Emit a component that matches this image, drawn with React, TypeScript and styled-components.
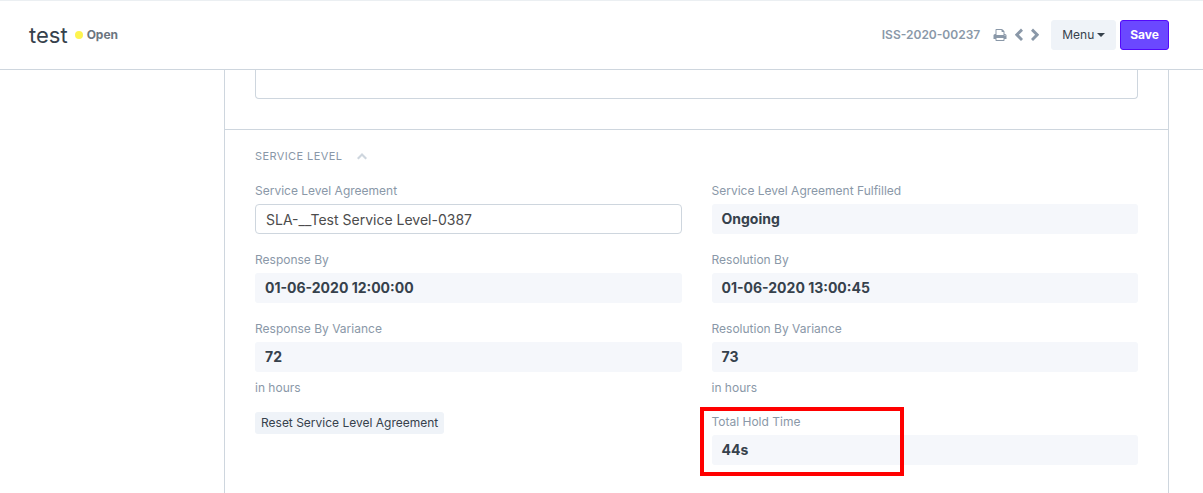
import React from "react";
import styled, { createGlobalStyle } from "styled-components";

const c = {
  text: "#36414c",
  muted: "#8a98a8",
  border: "#ced6de",
  valueBg: "#f5f7fb",
  buttonBg: "#eff3f8",
  primary: "#6b48ff",
  primaryBorder: "#5308fb",
};

const GlobalStyle = createGlobalStyle`
  *, *::before, *::after { box-sizing: border-box; }
  body {
    margin: 0;
    background: #fff;
    color: ${c.text};
    font-family: Inter, "Open Sans", sans-serif;
    font-size: 12px;
    line-height: 18px;
  }
  button, input, textarea { font: inherit; color: inherit; margin: 0; }
`;

const Page = styled.div`
  display: flex;
  flex-direction: column;
  min-height: 100vh;
`;

const PageHead = styled.header`
  border-top: 1px solid #ebeff2;
  border-bottom: 1px solid ${c.border};
  padding: 19px 34px 19px 29px;
`;

const HeadRow = styled.div`
  display: flex;
  align-items: center;
  max-width: 1140px;
  margin: 0 auto;
`;

const Title = styled.h1`
  margin: 0 7px 0 0;
  font-size: 22px;
  line-height: 30px;
  font-weight: 400;
`;

const Status = styled.span`
  display: flex;
  align-items: center;
  gap: 4px;
  color: #6c7680;
  font-weight: 700;

  &::before {
    content: "";
    width: 8px;
    height: 8px;
    border-radius: 50%;
    background: #fef44f;
  }
`;

const DocName = styled.span`
  margin-left: auto;
  margin-right: 13px;
  color: ${c.muted};
  font-weight: 600;
`;

const IconGroup = styled.div`
  display: flex;
  align-items: center;
  gap: 8px;
  margin-right: 12px;
`;

const IconButton = styled.button`
  display: flex;
  padding: 0;
  border: 0;
  background: none;
  color: ${c.muted};
`;

const HeadButton = styled.button<{ $primary?: boolean }>`
  display: flex;
  align-items: center;
  gap: 3px;
  height: 30px;
  margin-left: ${(p) => (p.$primary ? "4px" : "0")};
  padding: 0 ${(p) => (p.$primary ? "9px" : "10px")};
  border: 1px solid ${(p) => (p.$primary ? c.primaryBorder : c.buttonBg)};
  border-radius: 3px;
  background: ${(p) => (p.$primary ? c.primary : c.buttonBg)};
  color: ${(p) => (p.$primary ? "#fff" : c.text)};
  font-weight: ${(p) => (p.$primary ? 700 : 400)};
`;

const Body = styled.main`
  display: flex;
  flex: 1;
  padding: 0 34px 0 29px;
`;

const BodyGrid = styled.div`
  display: grid;
  grid-template-columns: 195px minmax(0, 1fr);
  width: 100%;
  max-width: 1140px;
  margin: 0 auto;
`;

const Form = styled.form`
  grid-column: 2;
  border: solid ${c.border};
  border-width: 0 1px;
`;

const DescriptionSection = styled.section`
  padding: 0 30px 30px;
`;

const Description = styled.textarea`
  display: block;
  width: 100%;
  height: 29px;
  border: 1px solid ${c.border};
  border-top: 0;
  border-radius: 0 0 4px 4px;
  resize: none;
`;

const Section = styled.section`
  border-top: 1px solid ${c.border};
  padding: 17px 30px 0;
`;

const SectionTitle = styled.h2`
  margin: 0 0 16px;
  font-size: 11px;
  line-height: 18px;
  font-weight: 400;
`;

const SectionToggle = styled.button`
  display: flex;
  align-items: center;
  gap: 15px;
  padding: 0;
  border: 0;
  background: none;
  color: ${c.muted};
  text-transform: uppercase;
  letter-spacing: 0.4px;

  svg { color: ${c.border}; }
`;

const Columns = styled.div`
  display: grid;
  grid-template-columns: 1fr 1fr;
  gap: 30px;
`;

const Column = styled.div`
  display: flex;
  flex-direction: column;
  align-items: stretch;
  gap: 16px;
`;

const FieldBox = styled.div`
  position: relative;
`;

const Label = styled.label`
  display: block;
  padding: 1px 0 4px;
  color: ${c.muted};
`;

const TextInput = styled.input`
  display: block;
  width: 100%;
  height: 30px;
  padding: 0 10px;
  border: 1px solid ${c.border};
  border-radius: 4px;
  background: #fff;
  color: #4c4c4c;
  font-size: 14px;
`;

const Value = styled.output`
  display: block;
  height: 30px;
  padding: 0 10px;
  border-radius: 3px;
  background: ${c.valueBg};
  font-size: 14px;
  line-height: 30px;
  font-weight: 700;
`;

const Help = styled.p`
  margin: 8px 0 0;
  color: ${c.muted};
  line-height: 16px;
`;

const SmallButton = styled.button`
  align-self: flex-start;
  height: 22px;
  padding: 0 6px;
  border: 0;
  border-radius: 3px;
  background: ${c.buttonBg};
`;

const Highlight = styled.div`
  position: absolute;
  top: -5px;
  left: -12px;
  width: 204px;
  height: 69px;
  border: 4px solid #f00;
  pointer-events: none;
`;

interface FieldProps {
  id: string;
  label: string;
  value: string;
  help?: string;
  editable?: boolean;
  highlighted?: boolean;
}

function Field({ id, label, value, help, editable, highlighted }: FieldProps) {
  return (
    <FieldBox>
      <Label htmlFor={id}>{label}</Label>
      {editable ? <TextInput id={id} type="text" defaultValue={value} /> : <Value id={id}>{value}</Value>}
      {help && <Help>{help}</Help>}
      {highlighted && <Highlight />}
    </FieldBox>
  );
}

const PrintIcon = () => (
  <svg width="14" height="14" viewBox="0 0 1792 1792" fill="currentColor" aria-hidden="true">
    <path d="M448 1536h896v-256h-896v256zm0-640h896v-384h-160q-40 0-68-28t-28-68v-160h-640v640zm1152 64q0-26-19-45t-45-19-45 19-19 45 19 45 45 19 45-19 19-45zm128 0v416q0 13-9.5 22.5t-22.5 9.5h-224v160q0 40-28 68t-68 28h-960q-40 0-68-28t-28-68v-160h-224q-13 0-22.5-9.5t-9.5-22.5v-416q0-79 56.5-135.5t135.5-56.5h64v-544q0-40 28-68t68-28h672q40 0 88 20t76 48l152 152q28 28 48 76t20 88v256h64q79 0 135.5 56.5t56.5 135.5z" />
  </svg>
);

const PreviousIcon = () => (
  <svg width="8" height="14" viewBox="0 0 8 14" fill="currentColor" aria-hidden="true">
    <path d="M6 .6 8 2.7 3.9 6.8 8 10.9 6 13-.2 6.8z" />
  </svg>
);

const NextIcon = () => (
  <svg width="8" height="14" viewBox="0 0 8 14" fill="currentColor" aria-hidden="true">
    <path d="M2 .6 0 2.7 4.1 6.8 0 10.9 2 13l6.2-6.2z" />
  </svg>
);

const CaretIcon = () => (
  <svg width="8" height="4" viewBox="0 0 8 4" fill="currentColor" aria-hidden="true">
    <path d="M0 0h8L4 4z" />
  </svg>
);

const CollapseIcon = () => (
  <svg width="10" height="7" viewBox="0 0 10 7" fill="currentColor" aria-hidden="true">
    <path d="M10 5 8.5 6.5 5 3 1.5 6.5 0 5l5-5z" />
  </svg>
);

export default function App() {
  return (
    <>
      <GlobalStyle />
      <Page>
        <PageHead>
          <HeadRow>
            <Title>test</Title>
            <Status>Open</Status>
            <DocName>ISS-2020-00237</DocName>
            <IconGroup>
              <IconButton type="button" aria-label="Print"><PrintIcon /></IconButton>
              <IconButton type="button" aria-label="Previous"><PreviousIcon /></IconButton>
              <IconButton type="button" aria-label="Next"><NextIcon /></IconButton>
            </IconGroup>
            <HeadButton type="button">Menu<CaretIcon /></HeadButton>
            <HeadButton type="button" $primary>Save</HeadButton>
          </HeadRow>
        </PageHead>
        <Body>
          <BodyGrid>
            <Form>
              <DescriptionSection>
                <Description aria-label="Description" />
              </DescriptionSection>
              <Section>
                <SectionTitle>
                  <SectionToggle type="button" aria-expanded="true">Service Level<CollapseIcon /></SectionToggle>
                </SectionTitle>
                <Columns>
                  <Column>
                    <Field id="sla" label="Service Level Agreement" value="SLA-__Test Service Level-0387" editable />
                    <Field id="response-by" label="Response By" value="01-06-2020 12:00:00" />
                    <Field id="response-variance" label="Response By Variance" value="72" help="in hours" />
                    <SmallButton type="button">Reset Service Level Agreement</SmallButton>
                  </Column>
                  <Column>
                    <Field id="fulfilled" label="Service Level Agreement Fulfilled" value="Ongoing" />
                    <Field id="resolution-by" label="Resolution By" value="01-06-2020 13:00:45" />
                    <Field id="resolution-variance" label="Resolution By Variance" value="73" help="in hours" />
                    <Field id="hold-time" label="Total Hold Time" value="44s" highlighted />
                  </Column>
                </Columns>
              </Section>
            </Form>
          </BodyGrid>
        </Body>
      </Page>
    </>
  );
}
